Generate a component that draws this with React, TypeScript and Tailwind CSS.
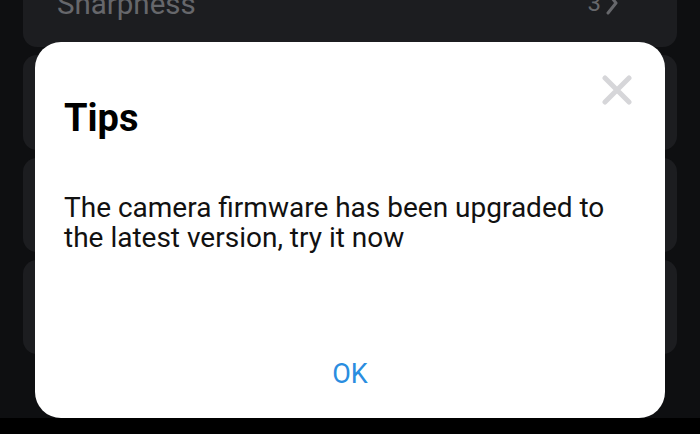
import React from "react";

export default function App() {
  return (
    <div
      className="relative w-[700px] h-[434px] overflow-hidden bg-[#0e0f11] flex flex-col"
      style={{ fontFamily: "Roboto, 'Liberation Sans', sans-serif" }}
    >
      <div className="flex-1 flex flex-col gap-[8px] px-[23px] mt-[-48px]">
        <div className="h-[95px] shrink-0 rounded-[14px] bg-[#1c1d20] flex items-end justify-between pl-[34px] pr-[58px] pb-[26px]">
          <span className="text-[29.5px] leading-[34px] text-[#66676b]">Sharpness</span>
          <span className="flex items-center gap-[4px] text-[24px] text-[#66676b]">
            3
            <svg width="14" height="24" viewBox="0 0 14 24" fill="none">
              <path d="M3 2l8 10-8 10" stroke="#66676b" strokeWidth="3" strokeLinecap="round" strokeLinejoin="round" />
            </svg>
          </span>
        </div>
        <div className="h-[95px] shrink-0 rounded-[14px] bg-[#1c1d20]" />
        <div className="h-[94px] shrink-0 rounded-[14px] bg-[#1c1d20]" />
        <div className="h-[94px] shrink-0 rounded-[14px] bg-[#1c1d20]" />
      </div>
      <div className="h-[16px] bg-black shrink-0" />

      <div className="absolute left-[35px] top-[42px] w-[630px] h-[376px] rounded-[26px] bg-white flex flex-col">
        <button className="absolute right-[33px] top-[33px] w-[30px] h-[30px] flex items-center justify-center">
          <svg width="30" height="30" viewBox="0 0 30 30">
            <path d="M3 3L27 27M27 3L3 27" stroke="#d6d6d9" strokeWidth="5" strokeLinecap="round" />
          </svg>
        </button>
        <div className="pl-[29px] pt-[54px] text-[38px] leading-[44px] font-bold text-black">Tips</div>
        <div className="pl-[29px] pr-[30px] mt-[53px] text-[28px] leading-[30px] text-[#111]">
          The camera firmware has been upgraded to the latest version, try it now
        </div>
        <div className="flex-1" />
        <div className="flex justify-center pb-[29px]">
          <span className="text-[27px] leading-[30px] text-[#2a8de0]">OK</span>
        </div>
      </div>
    </div>
  );
}
